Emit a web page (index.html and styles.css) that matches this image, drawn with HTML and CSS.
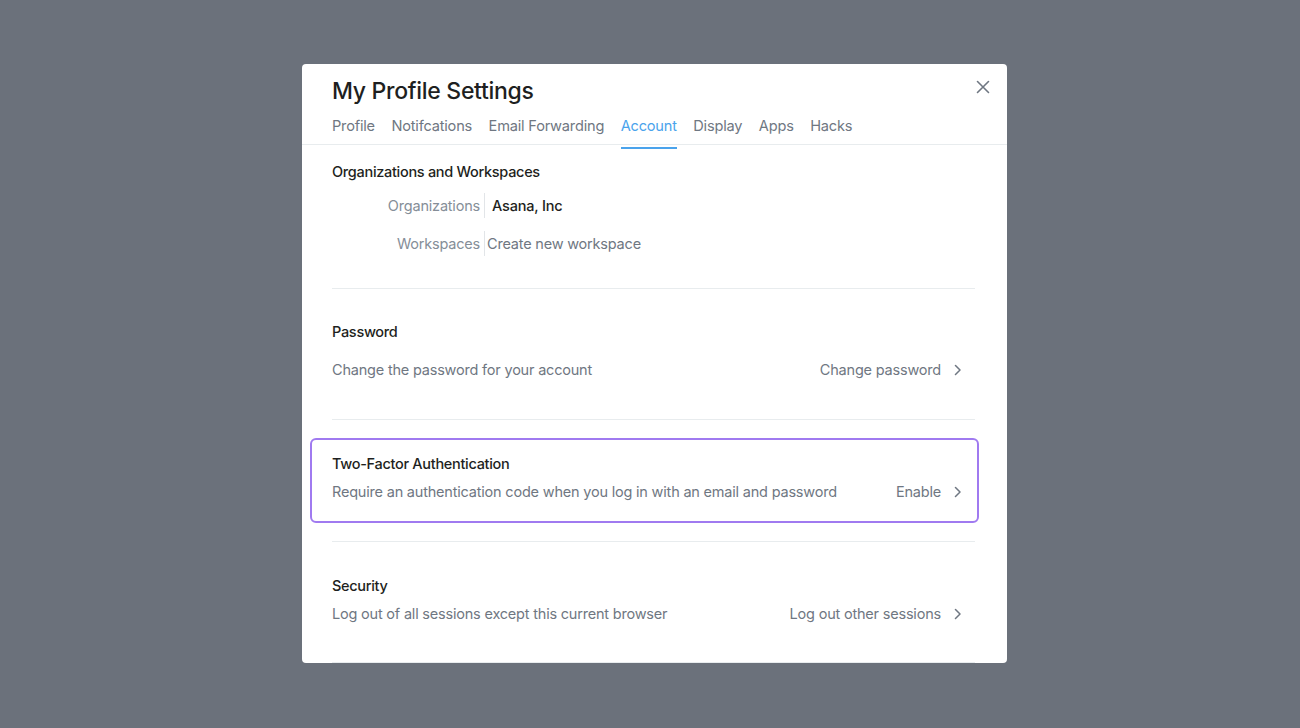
FILE: index.html
```html
<!DOCTYPE html>
<html lang="en">
<head>
<meta charset="utf-8">
<title>My Profile Settings</title>
<link rel="stylesheet" href="styles.css">
</head>
<body>
<div class="overlay">
  <div class="modal">
    <div class="header">
      <h1 class="title">My Profile Settings</h1>
      <button class="close" aria-label="Close">
        <svg width="14" height="14" viewBox="0 0 14 14"><path d="M1.5 1.5l11 11M12.5 1.5l-11 11" stroke="#6f7782" stroke-width="1.6" stroke-linecap="round" fill="none"/></svg>
      </button>
      <nav class="tabs">
        <span class="tab">Profile</span>
        <span class="tab">Notifcations</span>
        <span class="tab">Email Forwarding</span>
        <span class="tab active">Account</span>
        <span class="tab">Display</span>
        <span class="tab">Apps</span>
        <span class="tab">Hacks</span>
      </nav>
    </div>
    <div class="content">
      <section class="section orgs">
        <h2 class="sec-title">Organizations and Workspaces</h2>
        <div class="kv">
          <span class="kv-label">Organizations</span>
          <span class="kv-value strong">Asana, Inc</span>
        </div>
        <div class="kv">
          <span class="kv-label">Workspaces</span>
          <span class="kv-value link">Create new workspace</span>
        </div>
      </section>
      <section class="section password">
        <h2 class="sec-title">Password</h2>
        <div class="row">
          <span class="desc">Change the password for your account</span>
          <span class="action">Change password
            <svg class="chev" width="7" height="12" viewBox="0 0 7 12"><path d="M1.5 1.5l4.5 4.5-4.5 4.5" stroke="#6f7782" stroke-width="1.5" fill="none" stroke-linecap="round" stroke-linejoin="round"/></svg>
          </span>
        </div>
      </section>
      <section class="highlight">
        <h2 class="sec-title">Two-Factor Authentication</h2>
        <div class="row tight">
          <span class="desc">Require an authentication code when you log in with an email and password</span>
          <span class="action">Enable
            <svg class="chev" width="7" height="12" viewBox="0 0 7 12"><path d="M1.5 1.5l4.5 4.5-4.5 4.5" stroke="#6f7782" stroke-width="1.5" fill="none" stroke-linecap="round" stroke-linejoin="round"/></svg>
          </span>
        </div>
      </section>
      <section class="section security">
        <h2 class="sec-title">Security</h2>
        <div class="row tight">
          <span class="desc">Log out of all sessions except this current browser</span>
          <span class="action">Log out other sessions
            <svg class="chev" width="7" height="12" viewBox="0 0 7 12"><path d="M1.5 1.5l4.5 4.5-4.5 4.5" stroke="#6f7782" stroke-width="1.5" fill="none" stroke-linecap="round" stroke-linejoin="round"/></svg>
          </span>
        </div>
      </section>
    </div>
  </div>
</div>
</body>
</html>
```
FILE: styles.css
```css
* { box-sizing: border-box; }
html, body { margin: 0; padding: 0; }
body {
  background: #6b717b;
  height: 728px;
  overflow: hidden;
  font-family: Inter, "Noto Sans", "Liberation Sans", sans-serif;
  color: #1e1f21;
  -webkit-font-smoothing: antialiased;
}
.overlay {
  display: flex;
  justify-content: center;
  padding-top: 64px;
  padding-left: 9px;
}
.modal {
  width: 705px;
  height: 599px;
  background: #fff;
  border-radius: 4px;
  overflow: hidden;
  position: relative;
}
.header {
  padding: 11px 30px 0;
  border-bottom: 1px solid #e8ecee;
  position: relative;
}
.title {
  margin: 0;
  font-size: 23px;
  line-height: 32px;
  font-weight: 500;
  letter-spacing: -0.3px;
  color: #1e1f21;
}
.close {
  position: absolute;
  top: 16px;
  right: 17px;
  width: 14px;
  height: 14px;
  padding: 0;
  border: 0;
  background: none;
  display: flex;
}
.tabs {
  display: flex;
  gap: 16.5px;
  margin-top: 9px;
}
.tab {
  position: relative;
  font-size: 14.6px;
  line-height: 20px;
  padding-bottom: 8px;
  color: #6f7782;
  letter-spacing: -0.2px;
}
.tab.active { color: #4aa3ec; }
.tab.active::after {
  content: "";
  position: absolute;
  left: 0;
  right: 0;
  bottom: -5px;
  height: 2px;
  background: #4aa3ec;
}
.content {
  padding: 0 32px 0 30px;
}
.section {
  border-bottom: 1px solid #e8ecee;
}
.sec-title {
  margin: 0;
  font-size: 14.5px;
  line-height: 20px;
  font-weight: 500;
  color: #1e1f21;
  letter-spacing: -0.3px;
}
.orgs { padding: 17px 0 32px; }
.kv {
  display: flex;
  align-items: center;
  height: 25px;
  font-size: 14.5px;
  letter-spacing: -0.2px;
}
.orgs .sec-title + .kv { margin-top: 11px; }
.kv + .kv { margin-top: 13px; }
.kv-label {
  width: 153px;
  padding-right: 4px;
  text-align: right;
  color: #858e98;
  line-height: 25px;
  border-right: 1px solid #e2e5e8;
}
.kv-value { line-height: 25px; }
.kv-value.strong { padding-left: 7px; color: #1e1f21; font-weight: 500; }
.kv-value.link { padding-left: 2px; color: #6f7782; }
.password { padding: 33px 0 39px; }
.row {
  display: flex;
  justify-content: space-between;
  align-items: center;
  margin-top: 18px;
  padding-right: 14px;
  font-size: 14.5px;
  line-height: 20px;
  letter-spacing: -0.2px;
  color: #6f7782;
}
.row.tight { margin-top: 8px; }
.action {
  display: flex;
  align-items: center;
  gap: 13px;
}
.chev { display: block; }
.highlight {
  margin: 18px -4px 18px -22px;
  border: 2px solid #a07af0;
  border-radius: 6px;
  padding: 14px 2px 19px 20px;
}
.highlight + .section { border-top: 1px solid #e8ecee; }
.security { padding: 34px 0 38px; }
```
